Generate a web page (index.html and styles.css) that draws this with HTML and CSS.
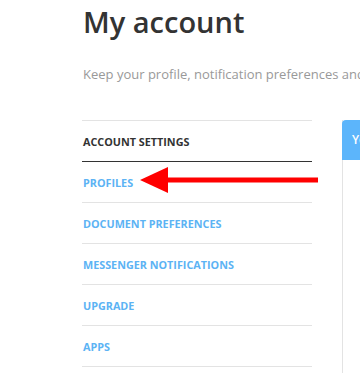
FILE: index.html
```html
<!DOCTYPE html>
<html lang="en">
<head>
    <meta charset="UTF-8">
    <meta name="viewport" content="width=device-width, initial-scale=1.0">
    <title>My account</title>
    <link rel="stylesheet" href="styles.css">
</head>
<body>
    <div class="page">
        <h1 class="pageTitle">My account</h1>
        <p class="pageIntro">Keep your profile, notification preferences and apps up to date.</p>

        <div class="accountLayout">
            <ul class="settingsMenu">
                <li class="menuHeading">ACCOUNT SETTINGS</li>
                <li><a class="menuLink" href="#">PROFILES</a></li>
                <li><a class="menuLink" href="#">DOCUMENT PREFERENCES</a></li>
                <li><a class="menuLink" href="#">MESSENGER NOTIFICATIONS</a></li>
                <li><a class="menuLink" href="#">UPGRADE</a></li>
                <li><a class="menuLink" href="#">APPS</a></li>
            </ul>

            <div class="profilePanel">
                <div class="panelHeader">Your profiles</div>
                <div class="panelBody"></div>
            </div>

            <!-- annotation arrow pointing at PROFILES -->
            <svg class="pointerArrow" width="180" height="30" viewBox="0 0 180 30">
                <rect x="27" y="12.5" width="151" height="5" fill="#ff0000"/>
                <polygon points="0,15 28,2 28,28" fill="#ff0000"/>
            </svg>
        </div>
    </div>
</body>
</html>
```

FILE: styles.css
```css
body {
    margin: 0;
    background-color: white;
    font-family: "Open Sans", "Liberation Sans", sans-serif;
    overflow: hidden;
}

.page {
    padding: 2px 0 0 83px;
    width: 600px;
}

.pageTitle {
    margin: 0;
    font-size: 29px;
    line-height: 40px;
    font-weight: 600;
    color: #333333;
}

.pageIntro {
    margin: 22px 0 0 0;
    font-size: 13px;
    line-height: 20px;
    color: #999999;
    white-space: nowrap;
}

.accountLayout {
    position: relative;
    display: flex;
    gap: 30px;
    margin-top: 36px;
}

.settingsMenu {
    list-style: none;
    margin: 0 0 0 -1px;
    padding: 0;
    width: 230px;
    border-top: 1px solid #e3e3e3;
}

.settingsMenu li {
    height: 40px;
    display: flex;
    align-items: center;
    padding-left: 1px;
    border-bottom: 1px solid #e3e3e3;
    font-size: 10.8px;
    font-weight: 700;
}

.settingsMenu .menuHeading {
    color: #333333;
    border-bottom-color: #333333;
}

.menuLink {
    color: #5cb3f4;
    text-decoration: none;
}

.profilePanel {
    width: 300px;
    border-left: 1px solid #e3e3e3;
    height: 260px;
}

.panelHeader {
    height: 40px;
    line-height: 40px;
    margin-left: -1px;
    padding-left: 10px;
    background-color: #5cb5fb;
    border-top-left-radius: 4px;
    color: white;
    font-size: 12px;
    font-weight: 600;
}

.pointerArrow {
    position: absolute;
    left: 57px;
    top: 45px;
}
```
